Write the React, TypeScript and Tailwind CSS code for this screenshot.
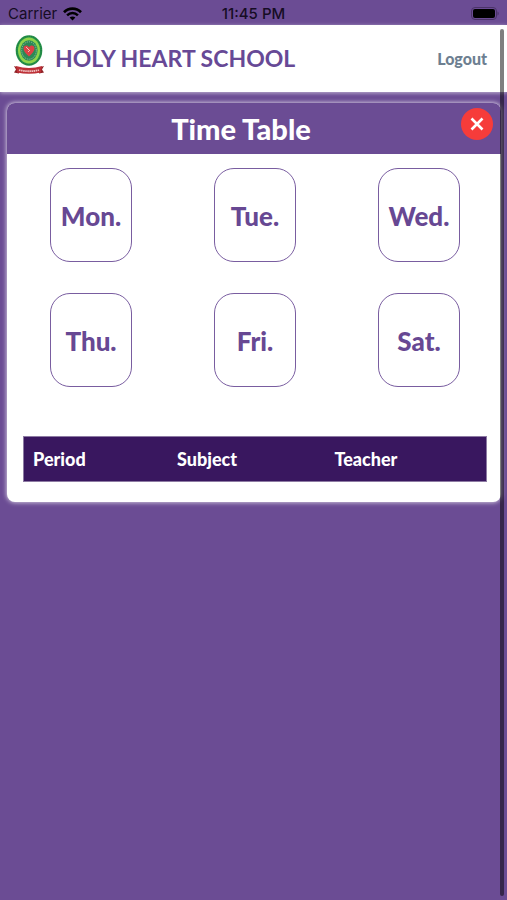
const days = ["Mon.", "Tue.", "Wed.", "Thu.", "Fri.", "Sat."];

function StatusBar() {
  return (
    <div className="grid h-[25px] grid-cols-3 items-center px-2 pt-[2px] font-['Inter',sans-serif] text-[15px] leading-5 text-[#160c24]">
      <div className="flex items-center gap-[6px]">
        <span>Carrier</span>
        <svg width="19" height="14" viewBox="0 0 19 14" fill="none" stroke="#000" aria-hidden="true">
          <path d="M1 5.2C5.8 0.4 13.2 0.4 18 5.2" strokeWidth="2.7" />
          <path d="M4.1 8.3C7.2 5.3 11.8 5.3 14.9 8.3" strokeWidth="2.5" />
          <path d="M6.6 10.6C8.3 9.1 10.7 9.1 12.4 10.6L9.5 13.5Z" fill="#000" stroke="none" />
        </svg>
      </div>
      <span className="text-center font-medium">11:45 PM</span>
      <svg className="justify-self-end" width="30" height="14" viewBox="0 0 30 14" aria-hidden="true">
        <rect x="2.5" y="0.5" width="25" height="12" rx="3.5" fill="none" stroke="#4b3369" />
        <rect x="4" y="2" width="22" height="9" rx="2" fill="#000" />
        <path d="M28.500 4.500v4c1.600-.7 1.600-3.300 0-4Z" fill="#4b3369" />
      </svg>
    </div>
  );
}

function Crest() {
  return (
    <svg width="30" height="40" viewBox="0 0 30 40" role="img" aria-label="Holy Heart School crest">
      <ellipse cx="15" cy="15.500" rx="13.300" ry="15.300" fill="#26934b" />
      <ellipse cx="15" cy="15.500" rx="12.200" ry="14.200" fill="none" stroke="#17703a" strokeWidth="0.8" strokeDasharray="1 1" />
      <ellipse cx="15" cy="15.500" rx="11" ry="13" fill="#8fd44b" />
      <ellipse cx="15" cy="15.500" rx="8.600" ry="10.200" fill="#2b8a55" />
      <ellipse cx="15" cy="15.500" rx="7.300" ry="8.700" fill="none" stroke="#8dbda1" strokeWidth="1" strokeDasharray="1.2 1" />
      <path d="M15 21.500C11.500 18 9.500 16 9.500 13.200C9.500 10 13.500 9.500 15 12.200C16.500 9.500 20.500 10 20.500 13.200C20.500 16 18.500 18 15 21.500Z" fill="#dc4146" />
      <path d="M12 12L15 15M14 17L16 15" stroke="#f3d5c5" strokeWidth="0.900" fill="none" />
      <path d="M0 31L5 32.500V38.500L0 37.500L2 34.500Z" fill="#8e2025" />
      <path d="M30 31L25 32.500V38.500L30 37.500L28 34.500Z" fill="#8e2025" />
      <path d="M2 31Q15 35 28 31L27 37.500Q15 40 3 37.500Z" fill="#bd3037" />
      <path d="M5 35Q15 37.500 25 35" fill="none" stroke="#efc5c5" strokeWidth="1.800" strokeDasharray="1.500 0.600" />
    </svg>
  );
}

export default function App() {
  return (
    <div className="relative min-h-screen bg-[#6b4c94] font-['Lato',sans-serif]">
      <StatusBar />
      <header className="flex h-[67px] items-center justify-between bg-white pr-5 pl-[14px] shadow-[0_1px_4px_rgba(255,255,255,0.6)]">
        <div className="flex items-center gap-[11px]">
          <div className="pb-2">
            <Crest />
          </div>
          <h1 className="text-[23px] font-bold whitespace-nowrap text-[#674996]">HOLY HEART SCHOOL</h1>
        </div>
        <button type="button" className="text-base font-black text-[#6d7f91]">Logout</button>
      </header>

      <main className="mt-[11px] mr-[6px] ml-[7px] overflow-hidden rounded-lg bg-white shadow-[0_0_5px_rgba(255,255,255,0.9)]">
        <div className="relative flex h-[51px] items-center justify-center bg-[#6b4c94] pr-[26px]">
          <h2 className="text-[29px] leading-9 font-black text-white">Time Table</h2>
          <button
            type="button"
            aria-label="Close"
            className="absolute top-[5px] right-2 flex size-8 items-center justify-center rounded-full bg-[#f63c3a]"
          >
            <svg width="14" height="14" viewBox="0 0 14 14" fill="none" stroke="#fff" strokeWidth="2.600" aria-hidden="true">
              <path d="M1.500 1.500L12.500 12.500M12.500 1.500L1.500 12.500" />
            </svg>
          </button>
        </div>

        <div className="grid grid-cols-3 justify-items-center gap-y-[31px] pt-[14px] pl-[2px]">
          {days.map((day) => (
            <button
              key={day}
              type="button"
              className="h-[94px] w-[82px] rounded-[20px] border border-[#795da0] pt-[2px] text-[26px] font-black text-[#674893]"
            >
              {day}
            </button>
          ))}
        </div>

        <div className="pt-[49px] pr-[14px] pb-5 pl-4">
          <table className="w-full table-fixed border-collapse bg-[#39175f] text-left text-lg text-white">
            <thead>
              <tr className="h-[45px] border border-[#8d7ba3]">
                <th scope="col" className="w-[31%] pl-[9px] font-black">Period</th>
                <th scope="col" className="w-[34%] pl-[10px] font-black">Subject</th>
                <th scope="col" className="pl-[10px] font-black">Teacher</th>
              </tr>
            </thead>
          </table>
        </div>
      </main>

      <div className="pointer-events-none absolute top-[29px] right-[3px] bottom-1 w-1 rounded-full bg-black/50" />
    </div>
  );
}
